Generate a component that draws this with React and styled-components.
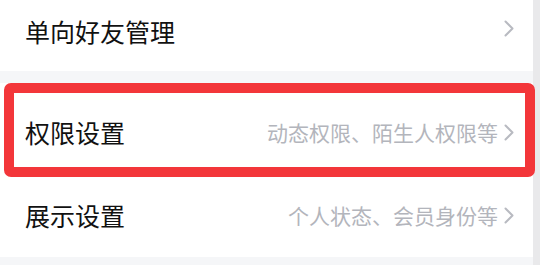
import React from "react";
import styled, { createGlobalStyle } from "styled-components";

const GlobalStyle = createGlobalStyle`
  html, body {
    margin: 0;
    padding: 0;
    background: #f5f6f8;
    font-family: "Noto Sans CJK SC", "Noto Sans", sans-serif;
  }
`;

const Page = styled.div`
  display: flex;
  height: 265px;
  overflow: hidden;
`;

const Main = styled.div`
  width: 533px;
  display: flex;
  flex-direction: column;
  background: #f5f6f8;
`;

const ScrollStrip = styled.div`
  flex: 1;
  background: #e9e9eb;
`;

const Row = styled.div`
  display: flex;
  align-items: center;
  height: ${(p) => p.h}px;
  padding: ${(p) => p.pad || "0"};
  padding-left: 25px;
  padding-right: 19px;
  box-sizing: border-box;
  background: #ffffff;
`;

const Title = styled.div`
  flex: 1;
  font-size: 25px;
  color: #111111;
`;

const Hint = styled.div`
  font-size: 21px;
  color: #b3b5bc;
  margin-right: 6px;
`;

const Highlight = styled.div`
  position: relative;
  margin-top: 12px;
`;

const RedFrame = styled.div`
  position: absolute;
  top: 0;
  left: 4px;
  right: -2px;
  bottom: 0;
  border: 10px solid #f3363a;
  border-radius: 7px;
  pointer-events: none;
`;

const Chevron = ({ up }) => (
  <svg
    width="10"
    height="17"
    viewBox="0 0 10 17"
    style={{ marginTop: up ? -4 : 0 }}
  >
    <path
      d="M1.5 1.5 L8.5 8.5 L1.5 15.5"
      fill="none"
      stroke="#b8bac1"
      strokeWidth="2"
      strokeLinecap="round"
      strokeLinejoin="round"
    />
  </svg>
);

export default function App() {
  return (
    <>
      <GlobalStyle />
      <Page>
        <Main>
          <Row h={71} pad="0 0 10px 0">
            <Title>单向好友管理</Title>
            <Chevron up />
          </Row>
          <Highlight>
            <Row h={94} pad="4px 0 0 0">
              <Title>权限设置</Title>
              <Hint>动态权限、陌生人权限等</Hint>
              <Chevron />
            </Row>
            <RedFrame />
          </Highlight>
          <Row h={80} pad="0 0 4px 0">
            <Title>展示设置</Title>
            <Hint>个人状态、会员身份等</Hint>
            <Chevron />
          </Row>
        </Main>
        <ScrollStrip />
      </Page>
    </>
  );
}
